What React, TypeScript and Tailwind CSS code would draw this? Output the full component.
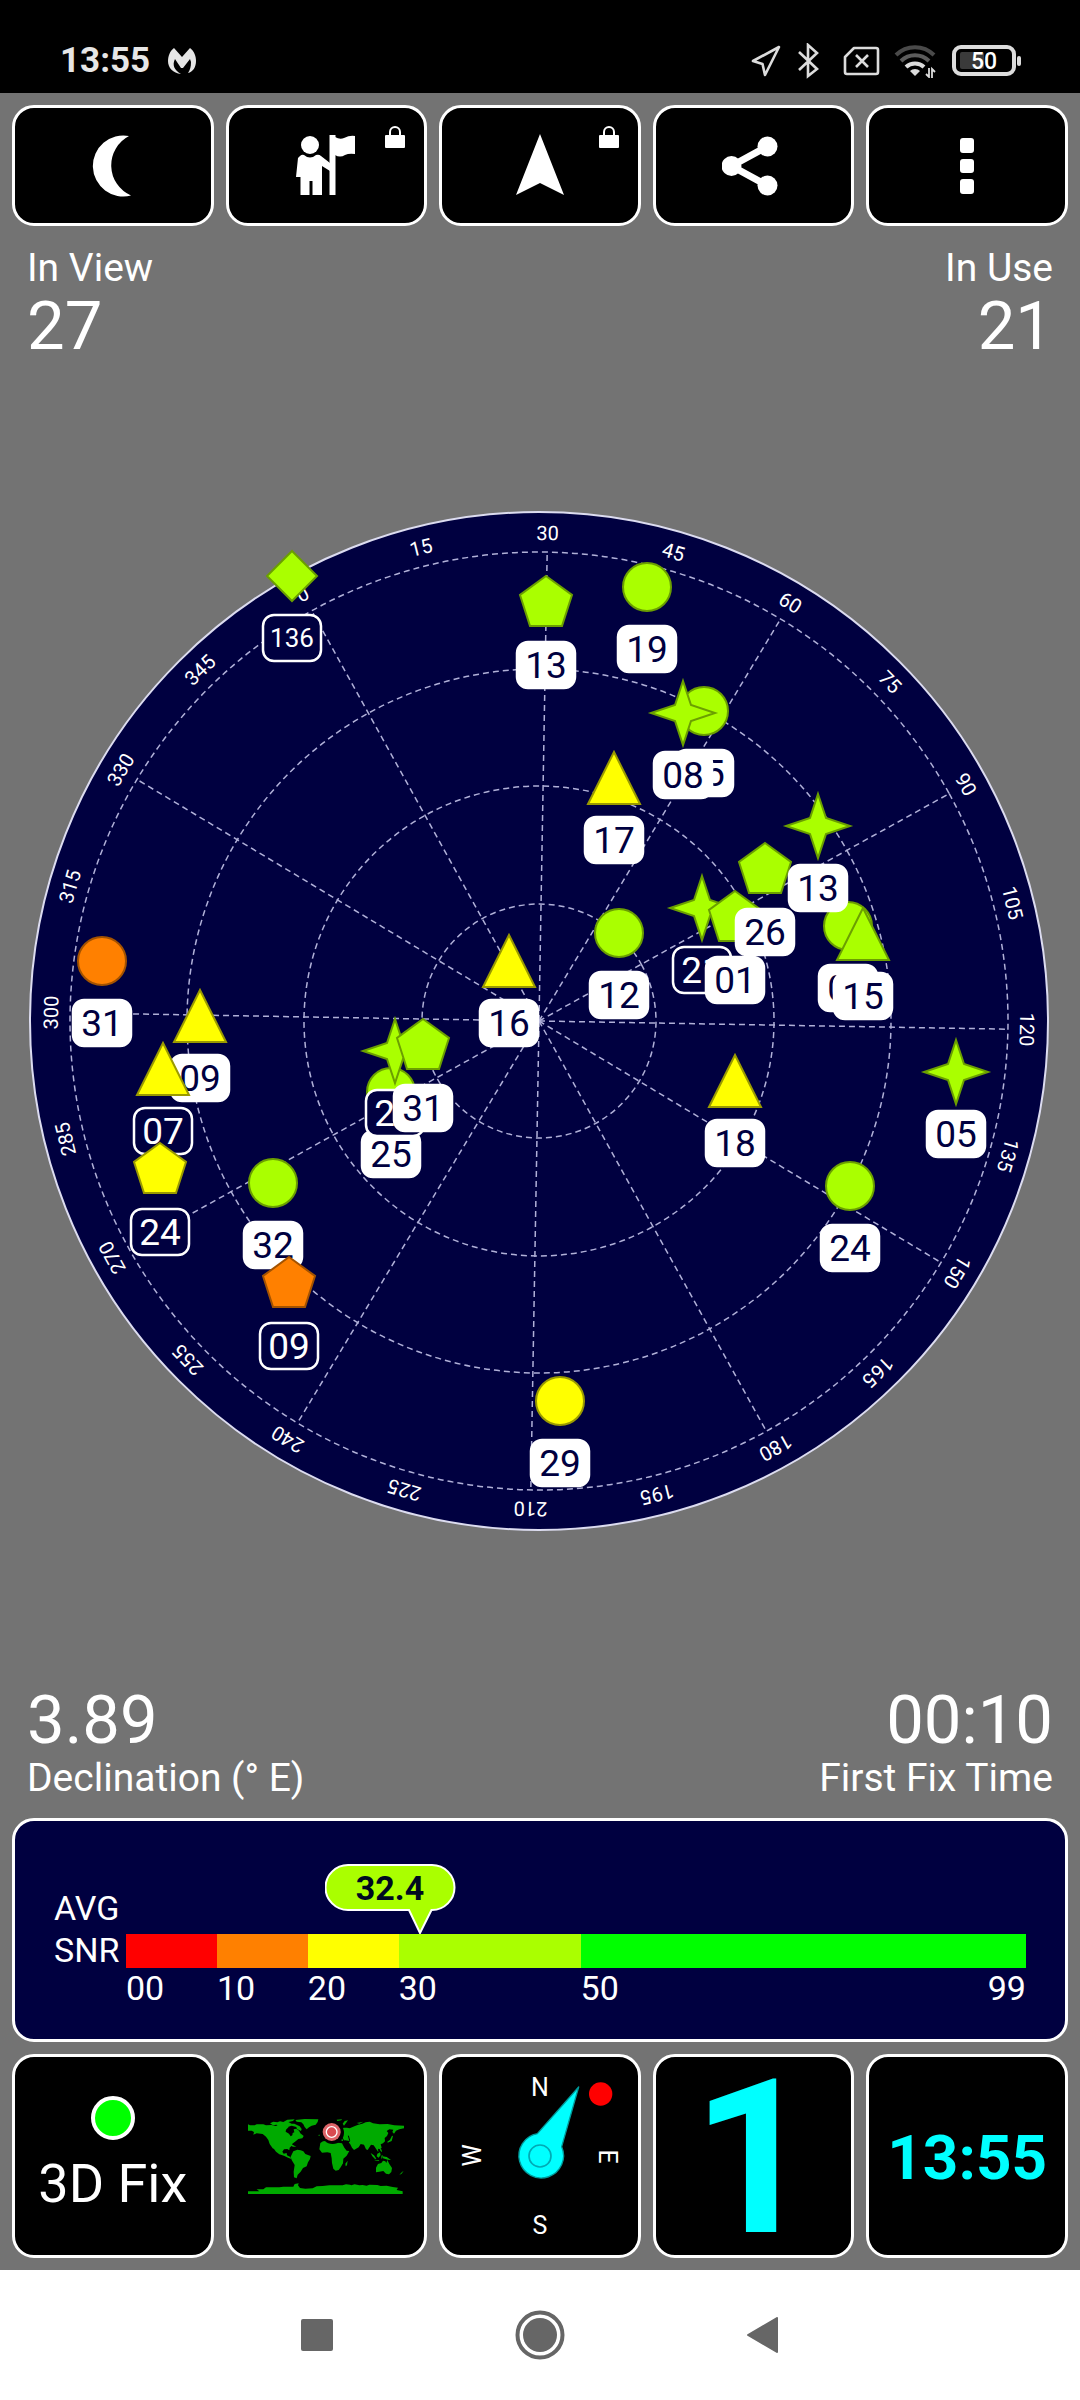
import type { ReactNode } from "react";

type Shape = "circle" | "pentagon" | "triangle" | "star" | "diamond";
type Level = "good" | "fair" | "weak";

interface Satellite {
  id: string;
  shape: Shape;
  level: Level;
  x: number;
  y: number;
  inUse: boolean;
}

const LEVELS: Record<Level, { fill: string; stroke: string }> = {
  good: { fill: "#aaff00", stroke: "#6b9f00" },
  fair: { fill: "#ffff00", stroke: "#9a9a00" },
  weak: { fill: "#ff8000", stroke: "#a35200" },
};

const POLYGONS: Record<Exclude<Shape, "circle">, string> = {
  pentagon: "0,-27 26,-8 16,23 -16,23 -26,-8",
  triangle: "0,-26 26,26 -26,26",
  star: "0,-32 8,-8 32,0 8,8 0,32 -8,8 -32,0 -8,-8",
  diamond: "0,-25 25,0 0,25 -25,0",
};

// positions are relative to the centre of the plot, drawn back to front
const SATELLITES: Satellite[] = [
  { id: "136", shape: "diamond", level: "good", x: -247, y: -445, inUse: false },
  { id: "13", shape: "pentagon", level: "good", x: 7, y: -418, inUse: true },
  { id: "19", shape: "circle", level: "good", x: 108, y: -434, inUse: true },
  { id: "05", shape: "circle", level: "good", x: 165, y: -310, inUse: true },
  { id: "08", shape: "star", level: "good", x: 144, y: -308, inUse: true },
  { id: "17", shape: "triangle", level: "fair", x: 75, y: -243, inUse: true },
  { id: "21", shape: "star", level: "good", x: 163, y: -113, inUse: false },
  { id: "01", shape: "pentagon", level: "good", x: 196, y: -103, inUse: true },
  { id: "26", shape: "pentagon", level: "good", x: 226, y: -151, inUse: true },
  { id: "02", shape: "circle", level: "good", x: 309, y: -95, inUse: true },
  { id: "13", shape: "star", level: "good", x: 279, y: -195, inUse: true },
  { id: "15", shape: "triangle", level: "good", x: 324, y: -87, inUse: true },
  { id: "12", shape: "circle", level: "good", x: 80, y: -88, inUse: true },
  { id: "31", shape: "circle", level: "weak", x: -437, y: -60, inUse: true },
  { id: "16", shape: "triangle", level: "fair", x: -30, y: -60, inUse: true },
  { id: "09", shape: "triangle", level: "fair", x: -339, y: -5, inUse: true },
  { id: "07", shape: "triangle", level: "fair", x: -376, y: 48, inUse: false },
  { id: "24", shape: "pentagon", level: "fair", x: -379, y: 149, inUse: false },
  { id: "32", shape: "circle", level: "good", x: -266, y: 162, inUse: true },
  { id: "09", shape: "pentagon", level: "weak", x: -250, y: 263, inUse: false },
  { id: "25", shape: "circle", level: "good", x: -148, y: 71, inUse: true },
  { id: "21", shape: "star", level: "good", x: -144, y: 30, inUse: false },
  { id: "31", shape: "pentagon", level: "good", x: -116, y: 25, inUse: true },
  { id: "18", shape: "triangle", level: "fair", x: 196, y: 60, inUse: true },
  { id: "24", shape: "circle", level: "good", x: 311, y: 165, inUse: true },
  { id: "05", shape: "star", level: "good", x: 417, y: 51, inUse: true },
  { id: "29", shape: "circle", level: "fair", x: 21, y: 380, inUse: true },
];

const HEADING = 29;
const RINGS = [117, 235, 352, 469];
const SPOKES = Array.from({ length: 12 }, (_, i) => i * 30);
const BEARINGS = Array.from({ length: 24 }, (_, i) => i * 15);

const SCALE = [
  { size: 10, color: "#ff0000", from: "00" },
  { size: 10, color: "#ff8000", from: "10" },
  { size: 10, color: "#ffff00", from: "20" },
  { size: 20, color: "#aaff00", from: "30" },
  { size: 49, color: "#00ff00", from: "50", to: "99" },
];

const AVERAGE = 32.4;

const StatusBar = () => (
  <header className="flex h-[93px] items-center justify-between bg-black pt-[28px] pr-[59px] pl-[60px]">
    <div className="flex items-center gap-[18px] text-[#e6e6e6]">
      <span className="text-[35px] leading-[40px] font-bold">13:55</span>
      <svg className="h-[26px] w-[28px]" viewBox="0 0 28 26" fill="currentColor">
        <path d="M6 0 14 9 22 0C26 3 28 8 28 13c0 6-3 11-8 12 2-3 3-6 3-11l-1-3-7 9h-2L7 11c-3 6-1 11 6 15C5 25 0 20 0 13 0 8 2 3 6 0Z" />
      </svg>
    </div>
    <div className="flex items-center text-[#dcdcdc]">
      <svg className="mr-4 h-[32px] w-[30px]" viewBox="0 0 30 32" fill="none" stroke="currentColor" strokeWidth="2.6" strokeLinejoin="round">
        <path d="M28 2 14 30 11.500 19 2 16Z" />
      </svg>
      <svg className="mr-6 h-[36px] w-[22px]" viewBox="0 0 22 36" fill="none" stroke="currentColor" strokeWidth="2.6">
        <path d="M2 9 20 26 11 33V2l9 8L2 27" />
      </svg>
      <svg className="mr-3.5 h-[30px] w-[37px]" viewBox="0 0 37 30" fill="none" stroke="currentColor" strokeWidth="2.6">
        <path d="M11 2h22a2 2 0 0 1 2 2v22a2 2 0 0 1-2 2H4a2 2 0 0 1-2-2V11Z" strokeLinejoin="round" />
        <path d="m13 9 12 12M25 9 13 21" />
      </svg>
      <svg className="mr-4 h-[34px] w-[42px]" viewBox="0 0 42 34" fill="none" strokeWidth="4">
        <path d="M2 11a27 27 0 0 1 38 0" stroke="#4a4a4a" />
        <path d="M7 17a20 20 0 0 1 28 0" stroke="#5c5c5c" />
        <path d="M12 23a13 13 0 0 1 18 0" stroke="currentColor" />
        <path d="M16 27a7 7 0 0 1 10 0l-5 5Z" fill="currentColor" />
        <path d="M35 24v9l-3-3M38 34v-9l3 3" stroke="currentColor" strokeWidth="1.8" />
      </svg>
      <svg className="h-[32px] w-[69px]" viewBox="0 0 69 32">
        <rect x="2" y="2" width="60" height="27" rx="7" fill="none" stroke="currentColor" strokeWidth="4" />
        <rect x="8" y="7" width="24" height="17" rx="2" fill="#3a3a3a" />
        <rect x="65" y="11" width="4" height="10" rx="2" fill="currentColor" />
        <text x="32" y="24" textAnchor="middle" fill="#ffffff" fontSize="23" fontWeight="500">
          50
        </text>
      </svg>
    </div>
  </header>
);

const MoonIcon = () => (
  <svg className="size-16" viewBox="0 0 64 64" fill="#fff">
    <path d="M48 2A30.500 30.500 0 1 0 50 61.500A33 33 0 0 1 48 2Z" />
  </svg>
);

const GuideIcon = () => (
  <svg className="size-16" viewBox="0 0 64 64" fill="#fff">
    <circle cx="16" cy="11" r="9" />
    <path d="M6 22q2-2 4-1 6 5 12 0 3-1 5 1l9 7v8l-8-5v29H18.500V47h-3v14H6.500V43H2l2-19Z" />
    <path d="M35.500 1h6v60h-6Z" />
    <path d="M41 3q5 3 9 1 6-3 11-2v18q-6-1-10 1-5 3-10 0Z" />
  </svg>
);

const ArrowIcon = () => (
  <svg className="size-16" viewBox="0 0 64 64" fill="#fff">
    <path d="M32 0 56 61 32 49 8 61Z" />
  </svg>
);

const ShareIcon = () => (
  <svg className="size-16" viewBox="0 0 64 64" fill="#fff">
    <path d="M45 12.500 9.500 32 45 51.500" fill="none" stroke="#fff" strokeWidth="7" />
    <circle cx="9.500" cy="32" r="10" />
    <circle cx="45.500" cy="12.500" r="10" />
    <circle cx="45.500" cy="51.500" r="10" />
  </svg>
);

const MoreIcon = () => (
  <svg className="size-16" viewBox="0 0 64 64" fill="#fff">
    <rect x="25" y="4" width="14" height="15" rx="3" />
    <rect x="25" y="25" width="14" height="14" rx="3" />
    <rect x="25" y="45" width="14" height="15" rx="3" />
  </svg>
);

const LockIcon = () => (
  <svg className="absolute top-[18px] right-[19px] h-[22px] w-[20px]" viewBox="0 0 20 22">
    <path d="M5 10V6a5 5 0 0 1 10 0v4" fill="none" stroke="#fff" strokeWidth="2" />
    <rect y="9" width="20" height="13" rx="1" fill="#fff" />
  </svg>
);

interface ToolButtonProps {
  label: string;
  locked?: boolean;
  children: ReactNode;
}

const ToolButton = ({ label, locked, children }: ToolButtonProps) => (
  <button
    aria-label={label}
    className="relative flex h-[121px] flex-1 items-center justify-center rounded-[22px] border-3 border-white bg-black"
  >
    {children}
    {locked && <LockIcon />}
  </button>
);

const Marker = ({ id, shape, level, x, y, inUse }: Satellite) => {
  const { fill, stroke } = LEVELS[level];

  return (
    <g transform={`translate(${x} ${y})`}>
      {shape === "circle" ? (
        <circle r="24" fill={fill} stroke={stroke} strokeWidth="2" />
      ) : (
        <polygon points={POLYGONS[shape]} fill={fill} stroke={stroke} strokeWidth="2" />
      )}
      <rect
        x="-29"
        y="39"
        width="58"
        height="46"
        rx="11"
        fill={inUse ? "#ffffff" : "#000040"}
        stroke="#ffffff"
        strokeWidth="2.5"
      />
      <text
        y={id.length > 2 ? 71 : 75}
        textAnchor="middle"
        fontSize={id.length > 2 ? 26 : 37}
        fill={inUse ? "#000040" : "#ffffff"}
      >
        {id}
      </text>
    </g>
  );
};

const SkyPlot = () => (
  <svg className="w-full" viewBox="-539 -538 1080 1080" role="img" aria-label="Satellites in view">
    <circle r="509" fill="#000040" stroke="#dcdcf0" strokeWidth="2" />
    <g transform={`rotate(${-HEADING})`}>
      <g fill="none" stroke="#b0b0d8" strokeWidth="1.5" strokeDasharray="6 4">
        {RINGS.map((radius) => (
          <circle key={radius} r={radius} />
        ))}
        {SPOKES.map((angle) => (
          <path key={angle} d="M0 0V-469" transform={`rotate(${angle})`} />
        ))}
      </g>
      <g fill="#ffffff" fontSize="20" textAnchor="middle">
        {BEARINGS.map((angle) => (
          <text key={angle} y="-481" transform={`rotate(${angle})`}>
            {angle}
          </text>
        ))}
      </g>
    </g>
    {SATELLITES.map((satellite, index) => (
      <Marker key={index} {...satellite} />
    ))}
  </svg>
);

const SnrPanel = () => (
  <section className="mx-3 flex items-start rounded-[22px] border-3 border-white bg-[#000040] pt-[66px] pr-[39px] pb-[31px] pl-[39px] text-[34px]">
    <div className="w-[72px] leading-[42px]">
      AVG
      <br />
      SNR
    </div>
    <div className="flex-1 pt-[47px]">
      <div className="relative flex h-[34px]">
        {SCALE.map((step) => (
          <div
            key={step.from}
            className="basis-0"
            style={{ flexGrow: step.size, backgroundColor: step.color }}
          />
        ))}
        <svg
          className="absolute bottom-full -ml-[96px] h-[70px] w-[131px]"
          style={{ left: `${(AVERAGE / 99) * 100}%` }}
          viewBox="0 0 131 70"
        >
          <path
            d="M23 1H107a22 22 0 0 1 0 45L106.500 46 95 69 84 46H23a22 22 0 0 1 0-45Z"
            fill="#aaff00"
            stroke="#fff"
            strokeWidth="2"
          />
          <text x="65" y="36" textAnchor="middle" fontSize="34" fontWeight="700" fill="#000a20">
            {AVERAGE}
          </text>
        </svg>
      </div>
      <div className="flex leading-[40px]">
        {SCALE.map((step) => (
          <div
            key={step.from}
            className="flex basis-0 justify-between"
            style={{ flexGrow: step.size }}
          >
            <span>{step.from}</span>
            {step.to && <span>{step.to}</span>}
          </div>
        ))}
      </div>
    </div>
  </section>
);

const Tile = ({ label, children }: { label: string; children: ReactNode }) => (
  <button
    aria-label={label}
    className="flex h-[204px] min-w-0 flex-1 flex-col items-center justify-center rounded-[22px] border-3 border-white bg-black"
  >
    {children}
  </button>
);

const WorldMap = () => (
  <svg className="h-[75px] w-[156px]" viewBox="24 30 468 225">
    <g fill="#00aa00">
      <path d="M24 46l6 3h14l6-3 20 0 8 3 16-1 14 3 9-5 10-4 8 6 8-2 3 8-8 8-1 6 10 6 5 8 5-3 1-7 5-2-2-9 8-2 8 6 4 8 10 8-4 7-12 2-8 7-10 7-2 6-6 6-1 8-6-4-10 1-5 7 4 6 9-2 1 7 10 5 3 6-10-4-12-6-14-4-10-8-6-8-4-2-9-13-4-12-7-10-10-8-18-2-10 4 2-8-7-4-13 0Z" />
      <path d="M90 43l10-5 12 2 8-3 10 2 12-7 22-1-5 5-14 3 10 5 8 0 16 8 6 8-2 6-12-6-2-6-14-4-10 3-8-4-16 1-12-3-10 2Z" />
      <path d="M166 33l28-3 41 1-2 8-6 8-12 3-8 5-7 6-6-7-4-8-6-6-14-2Z" />
      <path d="M145 106l10 0 8 4 6 3-10 0Z" />
      <path d="M160 127l12-5 10 2 8 3 6 8 16 6-2 9-6 10-4 12-11 5-7 11-9 9-3 11-8-3-1-17 3-20-9-15-3-10Z" />
      <path d="M241 102l8-5 16-2 14 0 15 6 12 2 7 13 7 9 8 1-8 14-10 9-1 14-7 12-6 8-9 2-7-6-4-17-1-14-3-16-10-2-16 1-8-10Z" />
      <path d="M245 86h12l6-6 40-18 8-6 10 0 8 2 16-7 10-4 12-3 10-4 12-2 10 5 20 3 24-1 20 4 29 1v8l-14 3-10 4-6 9-5-5 3-7-12-1-8 5 5 6-4 9-7 6 1 10-6 6-7 3 3 10-5 5-6-2 1 11-7-11-7-10-8-2-10 16-5-2-6-14-10-2-6 10-14 8-6-7-6-12-4-2 3-6-14-2-8 2-10-6-10 0-8 4-8 3Z" />
      <path d="M314 36l10-2-6 8-6 8-4-6ZM290 32l16-1-2 3-12 2ZM350 42l20-4-12 6Z" />
      <path d="M408 176l6-11 10-3 5-7 7 2 3 5 3-9 6 12 8 12-2 12-7 7-9-2-8-8-12 2-10 2Z" />
      <path d="M392 132l10 7 7 10-4 1-8-8ZM412 134l8-4 2 8-6 8-6-4ZM428 142l12 2 13 9-10-1-14-4ZM419 118l6 4 1 8-5-5ZM404 152l14 2-2 2-12-2ZM424 140l4-2-1 10-3 1ZM442 98l8-6 6-12 3 1-4 15-12 5ZM478 197l8-8 5-3-7 9ZM316 164l7-9-2 14-4 3ZM234 78l6-1-2 4Z" />
      <path d="M24 247h34l-8-6h20l8-6h40l12-2h30l4-8 12-2-2 6 6 8 16 2 22-1 12-6 18-1 20-2h40l10-3 12 1 4 2 10-3 14 3 10-1 12 2 8-3 24 1 10 3 18-1 18 4 16 2-4 7 18 4v8H24Z" />
    </g>
    <path d="M305 83l10 20 6 6 5-5M325 80l4 14-4 6" fill="none" stroke="#000" strokeWidth="3" />
    <circle cx="278" cy="71" r="34" fill="#000" />
    <circle cx="275" cy="69" r="27" fill="#dc6468" />
    <circle cx="275" cy="69" r="16" fill="#d94a50" stroke="#fff" strokeWidth="4" />
  </svg>
);

const Compass = () => (
  <svg className="h-[194px] w-[192px]" viewBox="12 12 576 582">
    <g fill="#fff" fontSize="75" textAnchor="middle">
      <text x="300" y="123">
        N
      </text>
      <text x="300" y="537">
        S
      </text>
      <text transform="translate(478 305) rotate(90)">E</text>
      <text transform="translate(124 301) rotate(-90)">W</text>
    </g>
    <path
      d="M416 96 292 236A67 67 0 1 0 365 275Z"
      fill="#00ffff"
      stroke="#009a9a"
      strokeWidth="4"
      strokeLinejoin="round"
    />
    <circle cx="300" cy="303" r="33" fill="none" stroke="#00aab4" strokeWidth="5" />
    <circle cx="482" cy="117" r="35" fill="#ff0000" />
  </svg>
);

const NavBar = () => (
  <nav className="flex h-[130px] items-center justify-center bg-white">
    <button aria-label="Recent apps" className="flex w-[223px] justify-center">
      <span className="size-8 rounded-xs bg-[#666666]" />
    </button>
    <button aria-label="Home" className="flex w-[223px] justify-center">
      <svg className="size-[50px]" viewBox="0 0 50 50">
        <circle cx="25" cy="25" r="22.500" fill="none" stroke="#666666" strokeWidth="4" />
        <circle cx="25" cy="25" r="17" fill="#666666" />
      </svg>
    </button>
    <button aria-label="Back" className="flex w-[223px] justify-center">
      <svg className="h-[36px] w-[32px]" viewBox="0 0 32 36">
        <path d="M30 1v34L1 18Z" fill="#666666" stroke="#666666" strokeWidth="2" strokeLinejoin="round" />
      </svg>
    </button>
  </nav>
);

const App = () => {
  return (
    <div className="flex min-h-screen flex-col bg-[#737373] font-['Roboto',sans-serif] text-white">
      <StatusBar />
      <div className="flex gap-3 px-3 pt-3">
        <ToolButton label="Night mode">
          <MoonIcon />
        </ToolButton>
        <ToolButton label="Guide" locked>
          <GuideIcon />
        </ToolButton>
        <ToolButton label="Navigate" locked>
          <ArrowIcon />
        </ToolButton>
        <ToolButton label="Share">
          <ShareIcon />
        </ToolButton>
        <ToolButton label="More options">
          <MoreIcon />
        </ToolButton>
      </div>
      <div className="flex justify-between px-[27px] pt-5">
        <div>
          <p className="text-[39px] leading-[44px]">In View</p>
          <p className="text-[67px] leading-[72px]">27</p>
        </div>
        <div className="text-right">
          <p className="text-[39px] leading-[44px]">In Use</p>
          <p className="text-[67px] leading-[72px]">21</p>
        </div>
      </div>
      <main className="flex flex-1 items-center">
        <SkyPlot />
      </main>
      <div className="flex justify-between px-[27px] pb-[18px]">
        <div>
          <p className="text-[67px] leading-[72px]">3.89</p>
          <p className="text-[39px] leading-[44px]">Declination (° E)</p>
        </div>
        <div className="text-right">
          <p className="text-[67px] leading-[72px]">00:10</p>
          <p className="text-[39px] leading-[44px]">First Fix Time</p>
        </div>
      </div>
      <SnrPanel />
      <div className="flex gap-3 p-3">
        <Tile label="3D Fix">
          <span className="size-11 rounded-full border-4 border-white bg-[#00ff00]" />
          <span className="mt-3 text-[54px] leading-[64px]">3D Fix</span>
        </Tile>
        <Tile label="World map">
          <WorldMap />
        </Tile>
        <Tile label="Compass">
          <Compass />
        </Tile>
        <Tile label="Speed">
          <span className="pt-1.5 text-[215px] leading-[192px] font-bold text-[#00ffff]">1</span>
        </Tile>
        <Tile label="Clock">
          <span className="pt-1 text-[62px] leading-[72px] font-bold text-[#00ffff]">13:55</span>
        </Tile>
      </div>
      <NavBar />
    </div>
  );
};

export default App;
